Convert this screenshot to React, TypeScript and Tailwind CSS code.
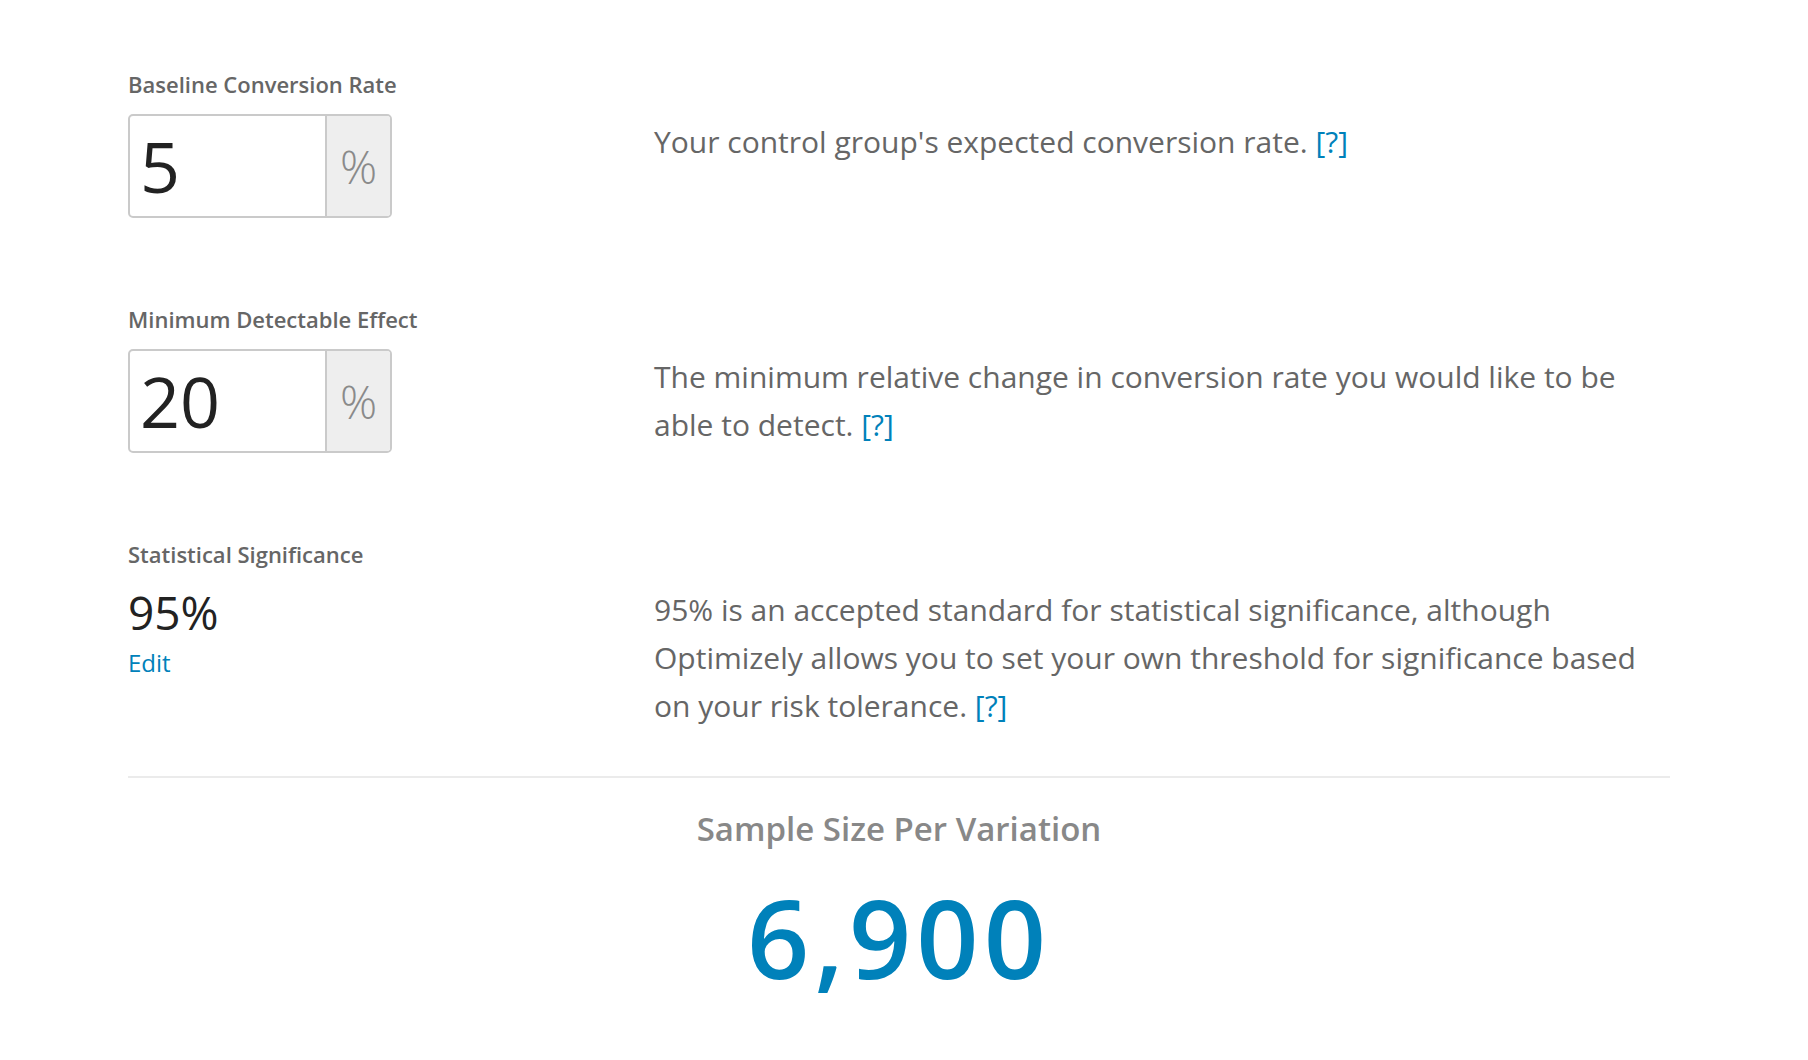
import React from 'react';

const font = { fontFamily: '"Open Sans", Lato, Arial, sans-serif' };

function HelpLink() {
  return <a href="#" className="text-[#0081ba]">[?]</a>;
}

function PercentInput({ value }: { value: string }) {
  return (
    <div className="mt-[16px] flex h-[104px] w-[264px] overflow-hidden rounded-[5px] border-2 border-[#cacaca]">
      <div className="flex flex-1 items-center pl-[10px] text-[70px] leading-none text-[#222]">{value}</div>
      <div className="flex w-[65px] items-center justify-center border-l-2 border-[#cacaca] bg-[#eeeeee] text-[46px] leading-none font-light text-[#8a8a8a]">
        %
      </div>
    </div>
  );
}

function Label({ children }: { children: React.ReactNode }) {
  return <div className="pt-[2px] text-[22px] leading-[28px] font-semibold text-[#666]">{children}</div>;
}

export default function App() {
  return (
    <div className="min-h-screen bg-white pl-[128px] pr-[138px] pt-[68px]" style={font}>
      <div className="flex flex-col gap-[85px]">
        {/* baseline */}
        <div className="grid grid-cols-[526px_1fr]">
          <div>
            <Label>Baseline Conversion Rate</Label>
            <PercentInput value="5" />
          </div>
          <p className="pt-[50px] text-[30px] leading-[48px] text-[#666] whitespace-nowrap">
            Your control group's expected conversion rate. <HelpLink />
          </p>
        </div>

        {/* mde */}
        <div className="grid grid-cols-[526px_1fr]">
          <div>
            <Label>Minimum Detectable Effect</Label>
            <PercentInput value="20" />
          </div>
          <p className="pt-[50px] text-[30px] leading-[48px] text-[#666] whitespace-nowrap">
            The minimum relative change in conversion rate you would like to be
            <br />
            able to detect. <HelpLink />
          </p>
        </div>

        {/* significance */}
        <div className="grid grid-cols-[526px_1fr]">
          <div>
            <Label>Statistical Significance</Label>
            <div className="mt-[21px] text-[46px] leading-none text-[#222]">95%</div>
            <a href="#" className="mt-[16px] block text-[24px] leading-none text-[#0081ba]">Edit</a>
          </div>
          <p className="pt-[48px] text-[30px] leading-[48px] text-[#666] whitespace-nowrap">
            95% is an accepted standard for statistical significance, although
            <br />
            Optimizely allows you to set your own threshold for significance based
            <br />
            on your risk tolerance. <HelpLink />
          </p>
        </div>
      </div>

      <div className="mt-[46px] h-[2px] bg-[#ebebeb]" />

      <div className="flex flex-col items-center">
        <div className="mt-[31px] text-[33px] leading-[1.2] font-semibold text-[#888]">Sample Size Per Variation</div>
        <div className="mt-[33px] text-[109px] leading-none font-semibold tracking-[5px] text-[#0081ba]">6,900</div>
      </div>
    </div>
  );
}
